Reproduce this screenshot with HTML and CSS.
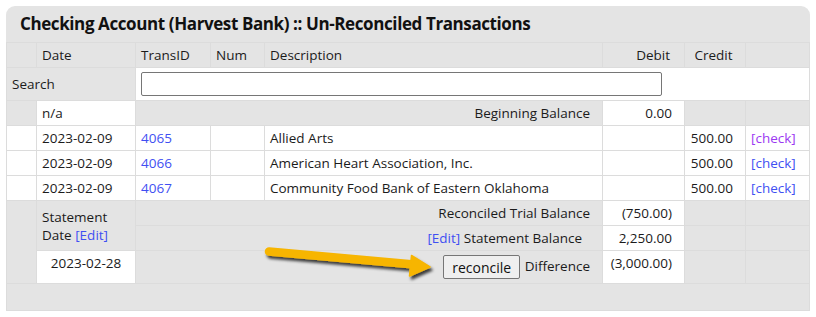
FILE: index.html
```html
<!DOCTYPE html>
<html>
<head>
<meta charset="utf-8">
<link rel="stylesheet" href="styles.css">
</head>
<body>
<div class="wrap">
  <div class="panel">
    <div class="title">Checking Account (Harvest Bank) :: Un-Reconciled Transactions</div>
    <table class="grid">
      <colgroup>
        <col class="c1"><col class="c2"><col class="c3"><col class="c4"><col class="c5"><col class="c6"><col class="c7"><col class="c8">
      </colgroup>
      <tr class="head">
        <td></td>
        <td>Date</td>
        <td>TransID</td>
        <td>Num</td>
        <td>Description</td>
        <td class="hdebit">Debit</td>
        <td class="hcredit">Credit</td>
        <td></td>
      </tr>
      <tr class="search">
        <td colspan="2" class="slabel">Search</td>
        <td colspan="6" class="w"><input type="text" class="sbox"></td>
      </tr>
      <tr class="row">
        <td></td>
        <td class="w">n/a</td>
        <td colspan="3" class="num">Beginning Balance</td>
        <td class="w num">0.00</td>
        <td></td>
        <td></td>
      </tr>
      <tr class="row">
        <td class="w"></td>
        <td class="w">2023-02-09</td>
        <td class="w"><a href="#" class="lnk">4065</a></td>
        <td class="w"></td>
        <td class="w">Allied Arts</td>
        <td class="w"></td>
        <td class="w num">500.00</td>
        <td class="w"><a href="#" class="lnk visited">[check]</a></td>
      </tr>
      <tr class="row">
        <td class="w"></td>
        <td class="w">2023-02-09</td>
        <td class="w"><a href="#" class="lnk">4066</a></td>
        <td class="w"></td>
        <td class="w">American Heart Association, Inc.</td>
        <td class="w"></td>
        <td class="w num">500.00</td>
        <td class="w"><a href="#" class="lnk">[check]</a></td>
      </tr>
      <tr class="row">
        <td class="w"></td>
        <td class="w">2023-02-09</td>
        <td class="w"><a href="#" class="lnk">4067</a></td>
        <td class="w"></td>
        <td class="w">Community Food Bank of Eastern Oklahoma</td>
        <td class="w"></td>
        <td class="w num">500.00</td>
        <td class="w"><a href="#" class="lnk">[check]</a></td>
      </tr>
      <tr class="row">
        <td rowspan="3"></td>
        <td rowspan="2" class="stmt"><div class="stmt-line">Statement</div><div class="stmt-line">Date <a href="#" class="lnk">[Edit]</a></div></td>
        <td colspan="3" class="num">Reconciled Trial Balance</td>
        <td class="w num">(750.00)</td>
        <td></td>
        <td></td>
      </tr>
      <tr class="row">
        <td colspan="3" class="num sbal"><a href="#" class="lnk">[Edit]</a> Statement Balance</td>
        <td class="w num">2,250.00</td>
        <td></td>
        <td></td>
      </tr>
      <tr class="tall">
        <td class="w top center">2023-02-28</td>
        <td colspan="3" class="num"><button class="btn">reconcile</button> Difference</td>
        <td class="w num top">(3,000.00)</td>
        <td></td>
        <td></td>
      </tr>
      <tr class="foot">
        <td colspan="8"></td>
      </tr>
    </table>
  </div>
</div>
<svg class="arrow" width="816" height="317" viewBox="0 0 816 317">
  <defs>
    <filter id="sh" x="-20%" y="-50%" width="140%" height="200%">
      <feDropShadow dx="2" dy="3" stdDeviation="1.6" flood-color="#000" flood-opacity="0.75"/>
    </filter>
  </defs>
  <g filter="url(#sh)" fill="#f7b500" stroke="#f7b500">
    <line x1="269" y1="251.5" x2="414" y2="264.5" stroke-width="8.5" stroke-linecap="round"/>
    <polygon points="411.5,255.5 430,267 409.5,276" stroke-width="1.5" stroke-linejoin="round"/>
  </g>
</svg>
</body>
</html>
```

FILE: styles.css
```css
html, body {
  margin: 0;
  padding: 0;
  background: #ffffff;
}
body {
  font-family: "Open Sans", "DejaVu Sans", sans-serif;
  font-size: 13.5px;
  color: #1b1b1b;
  position: relative;
  width: 816px;
  height: 317px;
  overflow: hidden;
}
.wrap {
  padding: 6px;
}
.panel {
  width: 804px;
  height: 305px;
  background: #e4e4e4;
  border-radius: 9px 9px 0 0;
  overflow: hidden;
}
.title {
  height: 36px;
  line-height: 36px;
  padding-left: 14px;
  font-weight: bold;
  font-size: 17px;
  color: #111;
  letter-spacing: -0.4px;
}
.grid {
  width: 804px;
  table-layout: fixed;
  border-collapse: separate;
  border-spacing: 1px;
  background: #dcdcdc;
}
.c1 { width: 29px; }
.c2 { width: 98px; }
.c3 { width: 74px; }
.c4 { width: 53px; }
.c5 { width: 337px; }
.c6 { width: 81px; }
.c7 { width: 60px; }
.c8 { width: 63px; }
.grid td {
  background: #e4e4e4;
  padding: 0 5px;
  white-space: nowrap;
  vertical-align: middle;
  line-height: 16px;
}
.grid td.w {
  background: #ffffff;
}
.head td { height: 24px; }
.search td { height: 32px; }
.row td { height: 24px; }
.tall td { height: 32px; }
.tall td.top { height: 28px; }
.foot td { height: 26px; }
.grid td.num {
  text-align: right;
  padding-right: 12px;
}
.grid td.hdebit {
  text-align: right;
  padding-right: 14px;
}
.grid td.hcredit {
  text-align: center;
  padding-right: 8px;
}
.grid td.top {
  vertical-align: top;
  padding-top: 4px;
}
.grid td.center {
  text-align: center;
}
.grid td.sbal {
  padding-right: 20px;
}
.stmt-line {
  height: 18px;
  line-height: 18px;
}
.sbox {
  display: block;
  width: 521px;
  height: 24px;
  box-sizing: border-box;
  border: 1px solid #767676;
  border-radius: 2px;
  margin: 0;
  padding: 0 4px;
  background: #fff;
}
.lnk {
  color: #3f4ff2;
  text-decoration: none;
}
.lnk.visited {
  color: #9b38f2;
}
.btn {
  font-family: "Open Sans", "DejaVu Sans", sans-serif;
  font-size: 14px;
  color: #111;
  width: 77px;
  height: 24px;
  padding: 0;
  border: 1px solid #767676;
  border-radius: 2px;
  background: #efefef;
  vertical-align: middle;
  margin-right: 1px;
}
.arrow {
  position: absolute;
  left: 0;
  top: 0;
  pointer-events: none;
}
```
